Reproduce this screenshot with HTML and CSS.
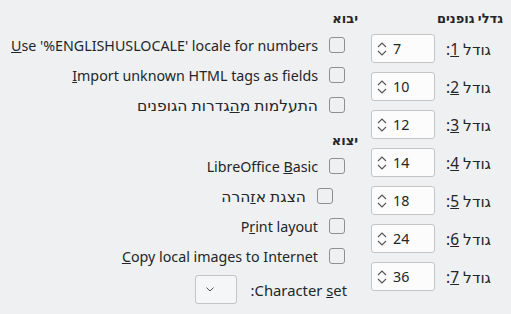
FILE: index.html
```html
<!DOCTYPE html>
<html dir="rtl">
    <head>
        <meta charset="UTF-8">
        <link rel="stylesheet" href="styles.css">
    </head>
    <body>
        <div class="page">
            <div class="sizes">
                <div class="head">גדלי גופנים</div>
                <div class="size-row"><span class="he">גודל <u>1</u>:</span><span class="spin"><svg class="arrows" width="10" height="16" viewBox="0 0 10 16"><path d="M1 6 L5 2 L9 6 M1 10 L5 14 L9 10" fill="none" stroke="#555" stroke-width="1.1"/></svg><span class="num">7</span></span></div>
                <div class="size-row"><span class="he">גודל <u>2</u>:</span><span class="spin"><svg class="arrows" width="10" height="16" viewBox="0 0 10 16"><path d="M1 6 L5 2 L9 6 M1 10 L5 14 L9 10" fill="none" stroke="#555" stroke-width="1.1"/></svg><span class="num">10</span></span></div>
                <div class="size-row"><span class="he">גודל <u>3</u>:</span><span class="spin"><svg class="arrows" width="10" height="16" viewBox="0 0 10 16"><path d="M1 6 L5 2 L9 6 M1 10 L5 14 L9 10" fill="none" stroke="#555" stroke-width="1.1"/></svg><span class="num">12</span></span></div>
                <div class="size-row"><span class="he">גודל <u>4</u>:</span><span class="spin"><svg class="arrows" width="10" height="16" viewBox="0 0 10 16"><path d="M1 6 L5 2 L9 6 M1 10 L5 14 L9 10" fill="none" stroke="#555" stroke-width="1.1"/></svg><span class="num">14</span></span></div>
                <div class="size-row"><span class="he">גודל <u>5</u>:</span><span class="spin"><svg class="arrows" width="10" height="16" viewBox="0 0 10 16"><path d="M1 6 L5 2 L9 6 M1 10 L5 14 L9 10" fill="none" stroke="#555" stroke-width="1.1"/></svg><span class="num">18</span></span></div>
                <div class="size-row"><span class="he">גודל <u>6</u>:</span><span class="spin"><svg class="arrows" width="10" height="16" viewBox="0 0 10 16"><path d="M1 6 L5 2 L9 6 M1 10 L5 14 L9 10" fill="none" stroke="#555" stroke-width="1.1"/></svg><span class="num">24</span></span></div>
                <div class="size-row"><span class="he">גודל <u>7</u>:</span><span class="spin"><svg class="arrows" width="10" height="16" viewBox="0 0 10 16"><path d="M1 6 L5 2 L9 6 M1 10 L5 14 L9 10" fill="none" stroke="#555" stroke-width="1.1"/></svg><span class="num">36</span></span></div>
            </div>

            <div class="options">
                <div class="head">יבוא</div>
                <div class="check-row"><span class="box"></span><span><u>U</u>se '%ENGLISHUSLOCALE' locale for numbers</span></div>
                <div class="check-row"><span class="box"></span><span><u>I</u>mport unknown HTML tags as fields</span></div>
                <div class="check-row"><span class="box"></span><span class="he">התעלמות מ<u>ה</u>גדרות הגופנים</span></div>

                <div class="head export">יצוא</div>
                <div class="check-row"><span class="box"></span><span>LibreOffice <u>B</u>asic</span></div>
                <div class="check-row sub"><span class="box"></span><span class="he">הצגת א<u>ז</u>הרה</span></div>
                <div class="check-row"><span class="box"></span><span>P<u>r</u>int layout</span></div>
                <div class="check-row"><span class="box"></span><span><u>C</u>opy local images to Internet</span></div>
                <div class="charset-row">
                    <span class="charset-label">Character <u>s</u>et:</span>
                    <span class="combo"><svg width="8" height="5" viewBox="0 0 8 5"><path d="M0.5 0.5 L4 4 L7.5 0.5" fill="none" stroke="#555" stroke-width="1"/></svg></span>
                </div>
            </div>
        </div>
    </body>
</html>
```

FILE: styles.css
```css
body {
    margin: 0;
    background: #eff0f1;
    color: #232629;
    font-family: "Noto Sans", "DejaVu Sans", sans-serif;
    font-size: 14.25px;
}
u {
    text-decoration-thickness: 1px;
    text-underline-offset: 1px;
}
.he {
    font-size: 15.5px;
}

.page {
    display: flex;
    padding: 9px 8px 0 0;
    gap: 13px;
}

.head {
    font-weight: bold;
    font-size: 13px;
    line-height: 18px;
    height: 18px;
}

/* font sizes column */
.sizes {
    width: 132px;
    flex: none;
}
.sizes .head {
    margin-bottom: 7px;
}
.size-row {
    display: flex;
    align-items: center;
    padding-right: 12px;
    margin-bottom: 9px;
}
.spin {
    margin-right: auto;
    width: 64px;
    height: 29px;
    box-sizing: border-box;
    border: 1px solid #c3c4c6;
    border-radius: 3px;
    background: #fcfcfc;
    display: flex;
    align-items: center;
    direction: ltr;
    padding-left: 5px;
    gap: 6px;
}

/* options column */
.options {
    flex: 1;
}
.options .head {
    margin-bottom: 3px;
}
.options .export {
    margin-top: 11px;
    margin-bottom: 2px;
}
.check-row {
    display: flex;
    align-items: center;
    height: 30px;
    padding-right: 13px;
    gap: 11px;
    white-space: nowrap;
}
.check-row.sub {
    padding-right: 25px;
}
.box {
    width: 16px;
    height: 16px;
    box-sizing: border-box;
    border: 1px solid #8d8f92;
    border-radius: 3px;
    flex: none;
}

.charset-row {
    display: flex;
    align-items: center;
    margin-top: 4px;
    padding-right: 11px;
    gap: 14px;
}
.charset-label {
    font-size: 14.8px;
}
.combo {
    width: 42px;
    height: 29px;
    box-sizing: border-box;
    border: 1px solid #c3c4c6;
    border-radius: 3px;
    background: #f5f6f7;
    display: flex;
    align-items: center;
    padding-left: 10px;
    direction: ltr;
}
```
